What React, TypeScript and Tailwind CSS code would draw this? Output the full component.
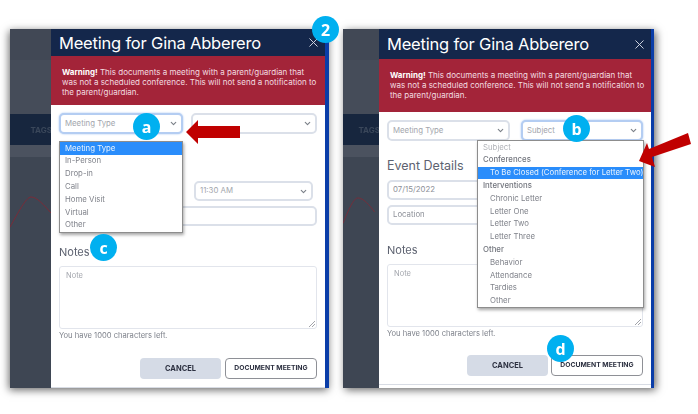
import React from "react";
import { ChevronDown, X } from "lucide-react";

const Chevron: React.FC = () => <ChevronDown size={9} strokeWidth={3} className="shrink-0 text-[#7b8088]" />;

const SelectBox: React.FC<{ label: string; focused?: boolean; className?: string }> = ({ label, focused, className }) => (
  <div
    className={`flex items-center justify-between rounded-[5px] border-2 bg-white pl-[4px] pr-[3px] text-[7.8px] text-[#a3a6ad] ${
      focused ? "border-[#b4cdf2] shadow-[0_0_2px_#9dbff0]" : "border-[#dbe0e9]"
    } ${className}`}
  >
    <span>{label}</span>
    <Chevron />
  </div>
);

const Field: React.FC<{ label: string; className?: string }> = ({ label, className }) => (
  <div className={`flex items-center rounded-[5px] border-2 border-[#dbe0e9] bg-white pl-[4px] text-[7.8px] text-[#8d9098] ${className}`}>
    {label}
  </div>
);

const Backdrop: React.FC<{ width: string; curve: string }> = ({ width, curve }) => (
  <div className={`relative flex shrink-0 flex-col overflow-hidden bg-[#3e4653] ${width}`}>
    <div className="h-[31px] bg-[#414855]" />
    <div className="h-[54px] bg-[#454c59]" />
    <div className="flex h-[31px] items-center justify-end bg-[#17263e] text-[8px] font-bold text-[#3a475a]">
      <span className="-mr-[1px]">TAGS</span>
    </div>
    <div className="h-[12px] bg-[#4b525f]" />
    <svg className="absolute left-0 top-[160px] h-[60px] w-full" viewBox="0 0 41 60" fill="none">
      <path d={curve} stroke="#7a2b38" strokeWidth="1" />
    </svg>
  </div>
);

const Panel: React.FC<{
  backdrop: string;
  bar: string;
  curve: string;
  wide: string;
  warn: string;
  selects: React.ReactNode;
  heading?: string;
  date?: string;
  time?: string;
  location?: string;
  headingGap: string;
  dateGap: string;
  notesGap: string;
  btnRow: string;
  btnGap: string;
  className: string;
  shadow: string;
}> = ({ backdrop, bar, curve, wide, warn, selects, heading, date, time, location, headingGap, dateGap, notesGap, btnRow, btnGap, className, shadow }) => (
  <div className={`flex h-[359px] shrink-0 blur-[0.35px] ${shadow} ${className}`}>
    <Backdrop width={backdrop} curve={curve} />
    <div className={`flex flex-col bg-white ${wide}`}>
      <div className="flex h-[30px] items-center justify-between bg-[#14274b] pl-[8px] pr-[4px] text-white">
        <span className="pt-[1px] text-[16.5px] leading-none tracking-[-0.2px]">Meeting for Gina Abberero</span>
        <X size={15} strokeWidth={1.5} className="text-[#d8dce6]" />
      </div>
      <div className={`whitespace-nowrap bg-[#a32439] pl-[11px] pt-[11px] text-[8px] leading-[10px] text-[#f3dde0] ${warn}`}>
        <div>
          <b className="text-white">Warning!</b> This documents a meeting with a parent/guardian that
        </div>
        <div>was not a scheduled conference. This will not send a notification to</div>
        <div>the parent/guardian.</div>
      </div>
      <div className="flex flex-1 flex-col px-[8px]">
        <div className="mt-[8px] flex justify-between">{selects}</div>
        <div className={`h-[14px] text-[12.5px] leading-[14px] text-[#5d6270] ${headingGap}`}>{heading}</div>
        <div className={`flex justify-between ${dateGap}`}>
          <Field label={date ?? ""} className="h-[20px] w-[123px]" />
          <SelectBox label={time ?? ""} className="mr-[4px] h-[20px] w-[119px]" />
        </div>
        <Field label={location ?? ""} className="mt-[5px] h-[20px]" />
        <div className={`text-[11px] leading-[14px] text-[#5d6270] ${notesGap}`}>Notes</div>
        <div className="relative mt-[7px] h-[63px] rounded-[3px] border border-[#e2e5ec] pl-[6px] pt-[3px] text-[7.5px] text-[#a3a6ad]">
          Note
          <svg className="absolute bottom-[1px] right-[1px] h-[7px] w-[7px]" viewBox="0 0 7 7" stroke="#8a8d94" strokeWidth="0.8">
            <path d="M1 7 7 1M4 7 7 4" />
          </svg>
        </div>
        <div className="mt-[1px] text-[7.6px] leading-[11px] text-[#7e828b]">You have 1000 characters left.</div>
        <div className={`flex justify-end ${btnRow} ${btnGap}`}>
          <div className="flex h-[21px] w-[81px] items-center justify-center rounded-[4px] bg-[#d5dbe6] text-[7.5px] font-bold text-[#2c3040]">CANCEL</div>
          <div className="flex h-[21px] w-[92px] items-center justify-center rounded-[4px] border border-[#8e9096] bg-white text-[6.8px] font-bold text-[#2c3040]">DOCUMENT MEETING</div>
        </div>
        <div className="-mx-[8px] mt-[8px] h-px bg-[#d8dce4]" />
      </div>
    </div>
    <div className={`bg-[#0a3da8] ${bar}`} />
  </div>
);

const Menu: React.FC<{ items: { label: string; kind?: "head" | "sub" | "on" | "hint" }[]; className: string }> = ({ items, className }) => (
  <div className={`absolute border border-[#8d8d8d] bg-white text-[7.8px] text-[#80838b] shadow-[1px_2px_3px_rgba(0,0,0,0.35)] blur-[0.35px] ${className}`}>
    {items.map((item, i) => (
      <div
        key={i}
        className={`flex h-[12.8px] items-center whitespace-nowrap pl-[5px] ${item.kind === "on" ? "bg-[#2a8dfb] text-[#eaf4ff]" : ""} ${
          item.kind === "hint" ? "text-[#b1b3b8]" : ""
        } ${item.kind === "head" ? "font-medium text-[#71747c]" : ""}`}
      >
        <span className={item.label.startsWith("  ") ? "pl-[7px]" : ""}>{item.label.trim()}</span>
      </div>
    ))}
  </div>
);

const Badge: React.FC<{ label: string; className: string }> = ({ label, className }) => (
  <div className={`absolute flex h-[27px] w-[27px] items-center justify-center rounded-full bg-[#00b0f0] font-['Open_Sans',sans-serif] text-[16px] font-bold leading-none text-white ${className}`}>
    {label}
  </div>
);

export default function App() {
  return (
    <div className="relative flex h-[414px] w-[698px] gap-[14px] overflow-hidden bg-white pl-[10px] pt-[29px] font-['Inter',sans-serif]">
      <Panel
        backdrop="w-[41px]"
        wide="w-[274px]"
        bar="w-[4px]"
        warn="h-[54px]"
        curve="M0 38C8 24 16 8 21 8 27 8 34 16 41 24"
        selects={
          <>
            <SelectBox label="Meeting Type" focused className="h-[21px] w-[124px]" />
            <SelectBox label="" className="h-[21px] w-[126px]" />
          </>
        }
        time="11:30 AM"
        headingGap="mt-[20px]"
        dateGap="mt-[13px]"
        notesGap="mt-[19px]"
        btnRow="gap-[4px]"
        btnGap="mt-[17px]"
        className="w-[319px]"
        shadow="shadow-[-1px_2px_8px_rgba(0,0,0,0.6)]"
      />
      <Panel
        backdrop="w-[36px]"
        wide="w-[272px]"
        bar="w-[3px]"
        warn="h-[53px]"
        curve="M0 35C6 20 12 6 17 6 23 6 30 14 36 22"
        selects={
          <>
            <SelectBox label="Meeting Type" className="h-[21px] w-[123px]" />
            <SelectBox label="Subject" focused className="h-[21px] w-[122px]" />
          </>
        }
        heading="Event Details"
        date="07/15/2022"
        location="Location"
        headingGap="mt-[18px]"
        dateGap="mt-[7px]"
        notesGap="mt-[18px]"
        btnRow="gap-[3px]"
        btnGap="mt-[16px]"
        className="w-[311px]"
        shadow="shadow-[2px_2px_8px_rgba(0,0,0,0.6)]"
      />

      <Menu
        className="left-[59px] top-[141px] w-[124px]"
        items={[
          { label: "Meeting Type", kind: "on" },
          { label: "In-Person" },
          { label: "Drop-in" },
          { label: "Call" },
          { label: "Home Visit" },
          { label: "Virtual" },
          { label: "Other" },
        ]}
      />
      <Menu
        className="left-[477px] top-[140px] w-[167px]"
        items={[
          { label: "Subject", kind: "hint" },
          { label: "Conferences", kind: "head" },
          { label: "  To Be Closed (Conference for Letter Two)", kind: "on" },
          { label: "Interventions", kind: "head" },
          { label: "  Chronic Letter" },
          { label: "  Letter One" },
          { label: "  Letter Two" },
          { label: "  Letter Three" },
          { label: "Other", kind: "head" },
          { label: "  Behavior" },
          { label: "  Attendance" },
          { label: "  Tardies" },
          { label: "  Other" },
        ]}
      />

      <svg className="absolute left-0 top-0 h-[414px] w-[698px]" viewBox="0 0 698 414" fill="#c00000">
        <polygon points="186,132 198,120 198,126 240,126 240,138 198,138 198,144" />
        <polygon points="639,161 655,167 652,157 691,144 688,133 649,149 647,143" />
      </svg>

      <Badge label="2" className="left-[312px] top-[16px]" />
      <Badge label="a" className="left-[133px] top-[113px]" />
      <Badge label="c" className="left-[90px] top-[234px]" />
      <Badge label="b" className="left-[563px] top-[115px]" />
      <Badge label="d" className="left-[547px] top-[335px]" />
    </div>
  );
}
